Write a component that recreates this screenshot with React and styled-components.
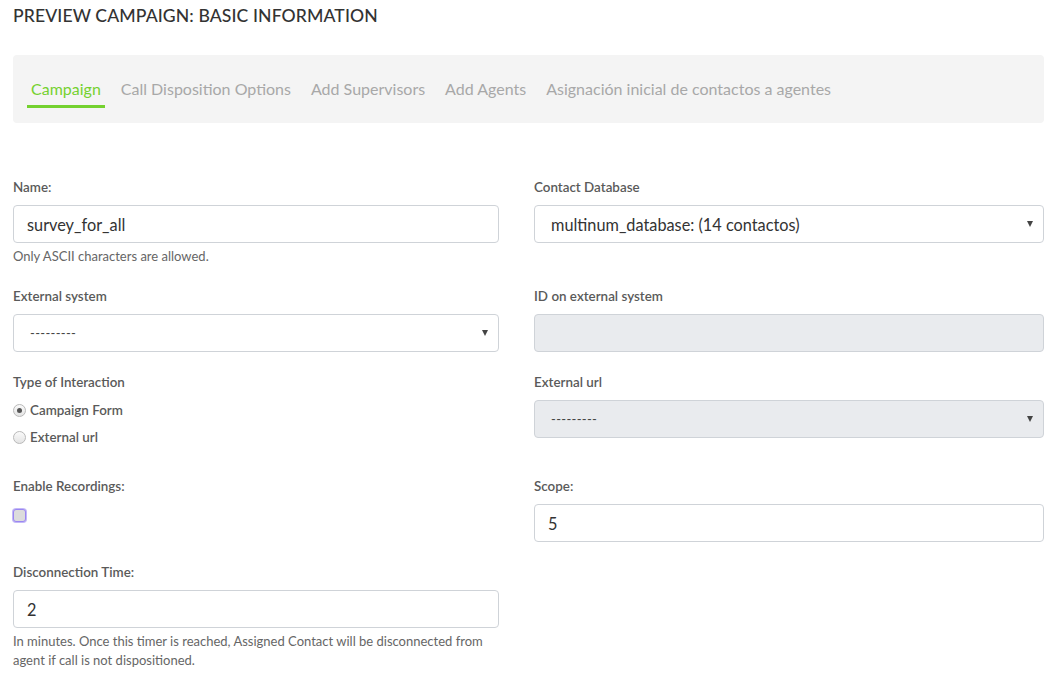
import React from "react";
import styled, { createGlobalStyle } from "styled-components";

const Global = createGlobalStyle`
  html, body { margin: 0; padding: 0; background: #fff; }
  body { font-family: Lato, "Open Sans", sans-serif; color: #333; }
  * { box-sizing: border-box; }
`;

const Page = styled.div`
  padding: 6px 14px 0 13px;
  width: 1058px;
`;

const Title = styled.h1`
  margin: 0;
  font-size: 17.6px;
  font-weight: 500;
  line-height: 20px;
  color: #333;
  letter-spacing: 0.1px;
`;

const TabBar = styled.nav`
  margin-top: 29px;
  height: 68px;
  background: #f4f4f4;
  border-radius: 4px;
  display: flex;
  align-items: flex-start;
  gap: 12px;
  padding: 21px 14px 0;
`;

const Tab = styled.a`
  display: block;
  padding: 0 4px;
  height: 32px;
  line-height: 26px;
  font-size: 16px;
  color: ${(p) => (p.$active ? "#74d12f" : "#a8a8a8")};
  border-bottom: 3px solid ${(p) => (p.$active ? "#74d12f" : "transparent")};
  cursor: pointer;
  white-space: nowrap;
`;

const Form = styled.form`
  margin-top: 55px;
`;

const Row = styled.div`
  display: grid;
  grid-template-columns: 486px 510px;
  column-gap: 35px;
  margin-bottom: 21px;
`;

const Group = styled.div`
  display: flex;
  flex-direction: column;
  align-items: flex-start;
`;

const Label = styled.label`
  font-size: 13.4px;
  font-weight: 600;
  line-height: 19px;
  color: #5a5a5a;
  margin-bottom: 8px;
`;

const Input = styled.div`
  width: 100%;
  height: 38px;
  border: 1px solid #cfd3d8;
  border-radius: 4px;
  background: ${(p) => (p.$disabled ? "#e9ebee" : "#fff")};
  display: flex;
  align-items: center;
  padding: 0 ${(p) => (p.$select ? "10px" : "12px")} 0 ${(p) => (p.$select ? "16px" : "13px")};
  font-size: 16.3px;
  color: #333;
`;

const Value = styled.span`
  flex: 1;
  white-space: nowrap;
`;

const Dashes = styled.span`
  flex: 1;
  font-size: 13px;
  color: #444;
  letter-spacing: 0.3px;
`;

const Caret = styled.span`
  width: 0;
  height: 0;
  border-left: 3.5px solid transparent;
  border-right: 3.5px solid transparent;
  border-top: 6px solid #444;
`;

const Help = styled.p`
  margin: 4px 0 0;
  font-size: 13px;
  line-height: 19px;
  color: #666;
`;

const Choice = styled.label`
  display: flex;
  align-items: center;
  gap: 4px;
  height: 20px;
  margin-bottom: 7px;
  font-size: 13.4px;
  font-weight: 600;
  color: #5a5a5a;
  &:last-child { margin-bottom: 9px; }
`;

const Radio = styled.span`
  width: 13px;
  height: 13px;
  border-radius: 50%;
  border: 1px solid #b9b9b9;
  background: linear-gradient(#fafafa, #e4e4e4);
  display: flex;
  align-items: center;
  justify-content: center;
  &::after {
    content: "";
    width: 5px;
    height: 5px;
    border-radius: 50%;
    background: ${(p) => (p.$checked ? "#555" : "transparent")};
  }
`;

const Check = styled.span`
  margin-top: 5px;
  width: 13px;
  height: 13px;
  border-radius: 3px;
  border: 1px solid #9a86f2;
  box-shadow: 0 0 0 1px #c3b8f7;
  background: #dcdcdc;
`;

const Select = ({ children, disabled }) => (
  <Input $select $disabled={disabled}>
    {children}
    <Caret />
  </Input>
);

export default function App() {
  return (
    <Page>
      <Global />
      <Title>PREVIEW CAMPAIGN: BASIC INFORMATION</Title>
      <TabBar>
        <Tab $active>Campaign</Tab>
        <Tab>Call Disposition Options</Tab>
        <Tab>Add Supervisors</Tab>
        <Tab>Add Agents</Tab>
        <Tab>Asignación inicial de contactos a agentes</Tab>
      </TabBar>
      <Form>
        <Row>
          <Group>
            <Label>Name:</Label>
            <Input><Value>survey_for_all</Value></Input>
            <Help>Only ASCII characters are allowed.</Help>
          </Group>
          <Group>
            <Label>Contact Database</Label>
            <Select><Value>multinum_database: (14 contactos)</Value></Select>
          </Group>
        </Row>
        <Row>
          <Group>
            <Label>External system</Label>
            <Select><Dashes>---------</Dashes></Select>
          </Group>
          <Group>
            <Label>ID on external system</Label>
            <Input $disabled />
          </Group>
        </Row>
        <Row>
          <Group>
            <Label>Type of Interaction</Label>
            <Choice><Radio $checked />Campaign Form</Choice>
            <Choice><Radio />External url</Choice>
          </Group>
          <Group>
            <Label>External url</Label>
            <Select disabled><Dashes>---------</Dashes></Select>
          </Group>
        </Row>
        <Row>
          <Group>
            <Label>Enable Recordings:</Label>
            <Check />
          </Group>
          <Group>
            <Label>Scope:</Label>
            <Input><Value>5</Value></Input>
          </Group>
        </Row>
        <Row>
          <Group>
            <Label>Disconnection Time:</Label>
            <Input><Value>2</Value></Input>
            <Help>
              In minutes. Once this timer is reached, Assigned Contact will be disconnected from
              <br />
              agent if call is not dispositioned.
            </Help>
          </Group>
        </Row>
      </Form>
    </Page>
  );
}
